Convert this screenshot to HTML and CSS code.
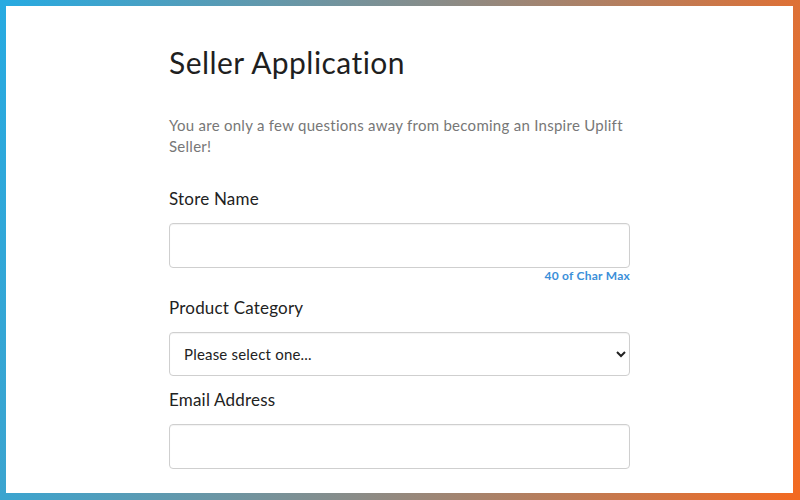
FILE: index.html
```html
<!DOCTYPE html>
<html lang="en">
<head>
<meta charset="utf-8">
<title>Seller Application</title>
<link rel="stylesheet" href="styles.css">
</head>
<body>
<div class="frame">
  <main class="form">
    <h1 class="title">Seller Application</h1>
    <p class="intro">You are only a few questions away from becoming an Inspire Uplift Seller!</p>
    <div class="field">
      <label class="label" for="store">Store Name</label>
      <input class="control" id="store" type="text">
      <span class="hint">40 of Char Max</span>
    </div>
    <div class="field">
      <label class="label" for="cat">Product Category</label>
      <select class="control select" id="cat">
        <option>Please select one...</option>
      </select>
    </div>
    <div class="field">
      <label class="label" for="email">Email Address</label>
      <input class="control" id="email" type="email">
    </div>
  </main>
</div>
</body>
</html>
```

FILE: styles.css
```css
html, body {
  margin: 0;
  padding: 0;
  background: #fff;
}
body {
  font-family: "Lato", "Open Sans", sans-serif;
  color: #222;
}
.frame {
  box-sizing: border-box;
  width: 800px;
  height: 500px;
  overflow: hidden;
  border-style: solid;
  border-width: 6px 7px 7px 6px;
  border-image: linear-gradient(100deg, #27aae1 0%, #8a8c88 50%, #f26a22 100%) 1;
  padding-top: 38px;
}
.form {
  width: 461px;
  margin: 0 auto;
  display: flex;
  flex-direction: column;
}
.title {
  margin: 0;
  font-size: 30px;
  line-height: 36px;
  font-weight: 400;
  letter-spacing: 0.45px;
  color: #1f1f1f;
}
.intro {
  margin: 35px 0 0;
  font-size: 15px;
  line-height: 21px;
  letter-spacing: 0.27px;
  color: #777;
}
.field {
  display: flex;
  flex-direction: column;
  margin-top: 12px;
}
.intro + .field {
  margin-top: 30px;
}
.label {
  font-size: 17px;
  line-height: 24px;
  letter-spacing: 0.2px;
  color: #222;
  margin-bottom: 12px;
}
.control {
  box-sizing: border-box;
  width: 100%;
  height: 45px;
  margin: 0;
  border: 1px solid #cfcfcf;
  border-radius: 4px;
  background: #fff;
  box-shadow: inset 0 1px 1px rgba(0,0,0,0.05);
  font-family: inherit;
  font-size: 15px;
  letter-spacing: 0.2px;
  color: #333;
  padding: 0 14px;
}
.select {
  height: 44px;
  color: #222;
  padding-left: 10px;
}
.hint {
  align-self: flex-end;
  font-size: 12px;
  line-height: 16px;
  font-weight: 700;
  letter-spacing: 0.25px;
  color: #3b8fd9;
}
```
